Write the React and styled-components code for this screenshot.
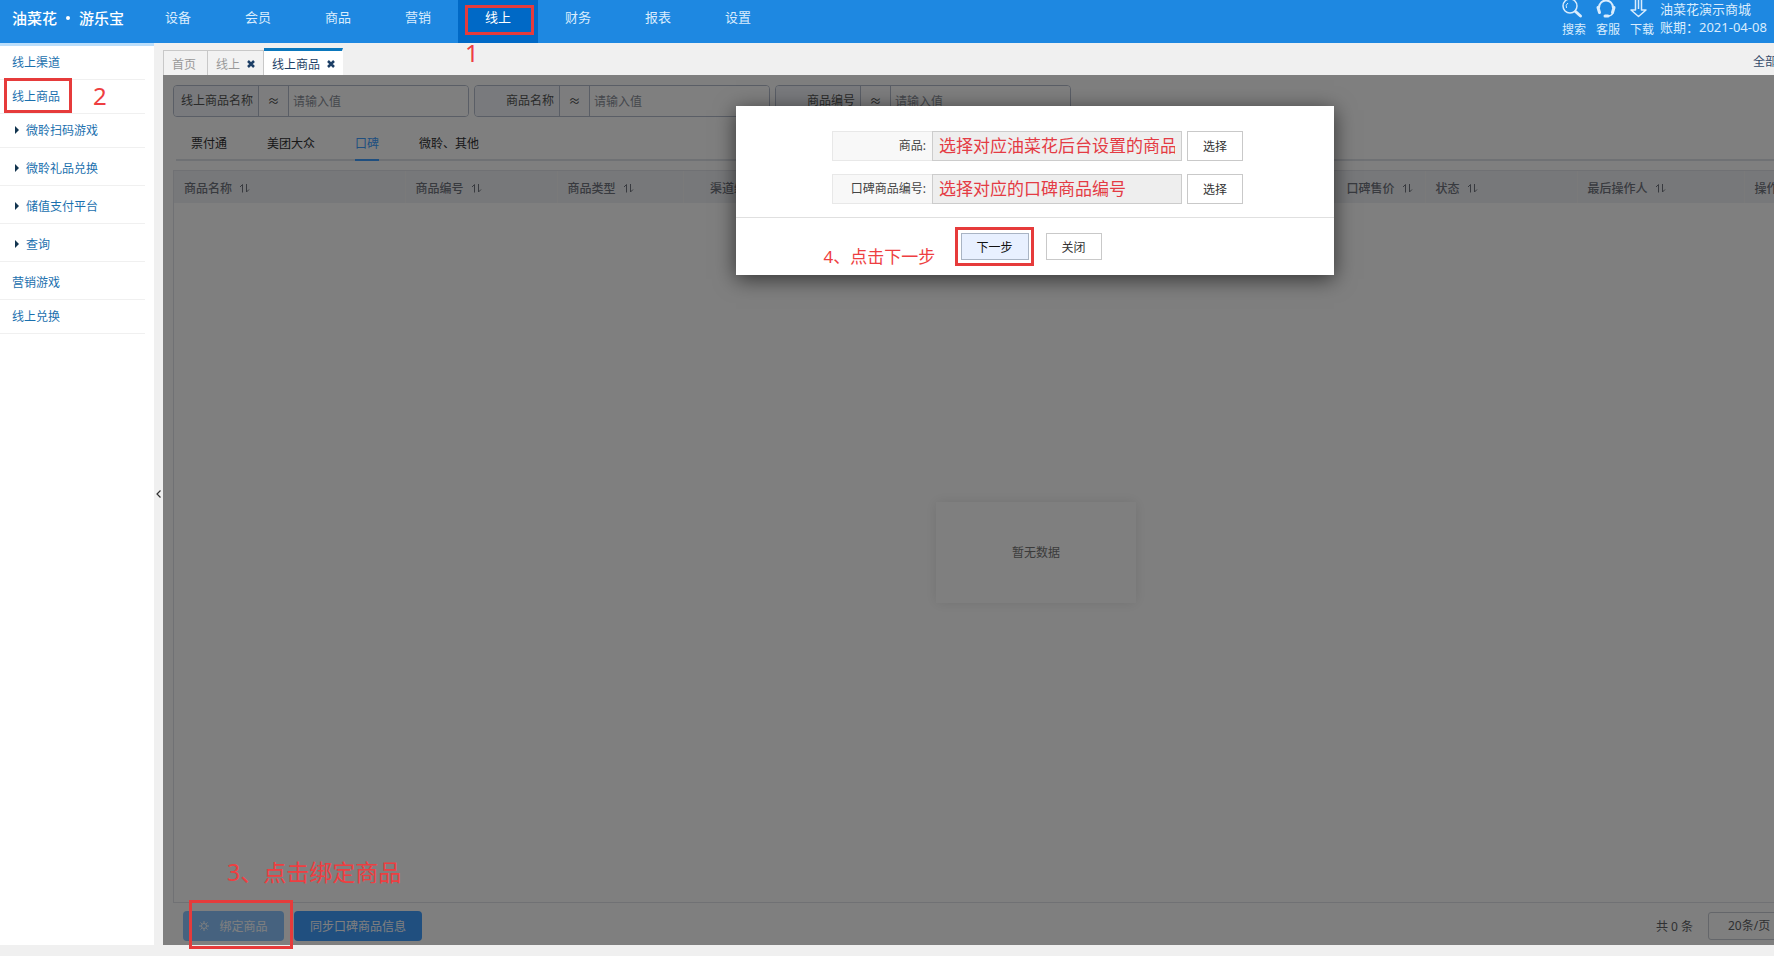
import { useState } from "react";
import styled, { createGlobalStyle } from "styled-components";

const GlobalStyle = createGlobalStyle`
    * {
        box-sizing: border-box;
    }

    body {
        margin: 0;
        background: #f0f0f0;
        font-family: "Noto Sans", "Noto Sans CJK SC", sans-serif;
        font-size: 12px;
        overflow: hidden;
    }

    button, input, select {
        font: inherit;
        margin: 0;
    }

    button {
        cursor: pointer;
        padding: 0;
    }

    a {
        text-decoration: none;
    }
`;

const Page = styled.div`
    display: flex;
    flex-direction: column;
    height: 100vh;
    padding-bottom: 11px;
`;

const Header = styled.header`
    display: flex;
    height: 43px;
    flex: none;
    background: #1e88e1;
    color: #fff;
`;

const Logo = styled.div`
    display: flex;
    justify-content: space-between;
    width: 138px;
    height: 35px;
    padding: 0 14px 0 12px;
    align-items: center;
    font-size: 15px;
    font-weight: 500;
    white-space: nowrap;
`;

const LogoDot = styled.span`
    width: 4px;
    height: 4px;
    border-radius: 50%;
    background: #fff;
`;

const Nav = styled.nav`
    display: flex;
    flex: 1;
`;

const NavLink = styled.a`
    position: relative;
    width: 80px;
    height: 43px;
    line-height: 35px;
    text-align: center;
    font-size: 13px;
    color: ${props => props.$active ? "#fff" : "#d9ecfd"};
    background: ${props => props.$active ? "#0069c6" : "transparent"};
`;

const Tools = styled.div`
    display: flex;
    gap: 10px;
`;

const Tool = styled.button`
    display: flex;
    flex-direction: column;
    justify-content: space-between;
    width: 24px;
    height: 39px;
    border: none;
    background: none;
    color: #d9ecfd;
    line-height: 18px;
    white-space: nowrap;

    svg {
        display: block;
        flex: none;
    }
`;

const Account = styled.div`
    width: 120px;
    padding-left: 6px;
    font-size: 13px;
    line-height: 18px;
    color: #d9ecfd;
    white-space: nowrap;
`;

const Body = styled.div`
    display: flex;
    flex: 1;
    min-height: 0;
`;

const Sidebar = styled.aside`
    width: 154px;
    flex: none;
    background: #fff;
    border-top: 3px solid #bbdefb;
`;

const SideLink = styled.a`
    position: relative;
    display: flex;
    align-items: center;
    gap: 7px;
    height: 34px;
    width: 145px;
    padding-left: ${props => props.$sub ? "15px" : "12px"};
    padding-bottom: 1px;
    margin-bottom: ${props => props.$sub ? "4px" : "0"};
    border-bottom: 1px solid #f0f0f0;
    color: #1b70ae;
`;

const Caret = styled.span`
    border-left: 4px solid #12344f;
    border-top: 4px solid transparent;
    border-bottom: 4px solid transparent;
`;

const Splitter = styled.button`
    display: flex;
    align-items: center;
    justify-content: center;
    width: 9px;
    flex: none;
    border: none;
    background: #f0f0f0;
    color: #333;
`;

const Main = styled.main`
    display: flex;
    flex-direction: column;
    flex: 1;
    min-width: 0;
    overflow-x: clip;
`;

const PageTabs = styled.div`
    display: flex;
    align-items: flex-end;
    height: 32px;
    flex: none;
`;

const PageTab = styled.div`
    display: flex;
    align-items: center;
    gap: 7px;
    height: ${props => props.$active ? "27px" : "25px"};
    padding: ${props => props.$active ? "2px 7px 0 8px" : "2px 8px 0 8px"};
    border: 1px solid ${props => props.$active ? "#fff" : "#c8c8c8"};
    border-bottom: none;
    border-top: ${props => props.$active ? "3px solid #0b78bd" : "1px solid #c8c8c8"};
    border-left-width: ${props => props.$first ? "1px" : "0"};
    background: ${props => props.$active ? "#fff" : "#f2f2f2"};
    color: ${props => props.$active ? "#1d3f66" : "#999"};

    &:first-child {
        padding-right: 11px;
    }
`;

const CloseTab = styled.button`
    display: flex;
    border: none;
    background: none;
    color: #1d3f66;
`;

const AllLink = styled.a`
    width: 21px;
    margin-left: auto;
    overflow: hidden;
    color: #334a6b;
    line-height: 26px;
    white-space: nowrap;
`;

/* the list is wider than the window and runs out past its right edge */
const Workspace = styled.section`
    position: relative;
    display: flex;
    flex-direction: column;
    flex: 1;
    min-height: 0;
    margin-right: -135px;
    padding: 10px 10px 0;
    background: #fff;
`;

const Filters = styled.div`
    display: flex;
    gap: 5px;
`;

const Filter = styled.div`
    display: flex;
    width: 296px;
    height: 32px;
    border: 1px solid #b4bccc;
    border-radius: 4px;
    overflow: hidden;

    label {
        width: 84px;
        padding-right: 5px;
        line-height: 30px;
        text-align: right;
        background: #f2f5fa;
        color: #555;
    }

    button {
        width: 31px;
        border: solid #b4bccc;
        border-width: 0 1px;
        background: #fbfbfd;
        color: #444;
    }

    input {
        flex: 1;
        min-width: 0;
        padding: 0 4px;
        border: none;
        outline: none;
        background: #fff;
    }

    input::placeholder {
        color: #8a8f99;
        opacity: 1;
    }
`;

const ChannelTabs = styled.div`
    display: flex;
    gap: 40px;
    height: 34px;
    flex: none;
    margin: 10px 3px 0;
    padding-left: 15px;
    border-bottom: 2px solid #dfe2e8;
`;

const ChannelTab = styled.button`
    height: 34px;
    border: none;
    border-bottom: 2px solid ${props => props.$active ? "#409eff" : "transparent"};
    background: none;
    color: ${props => props.$active ? "#409eff" : "#303133"};
`;

const List = styled.div`
    display: flex;
    flex-direction: column;
    flex: 1;
    margin-top: 9px;
    border: 1px solid #e0e3e8;
`;

const Table = styled.table`
    width: 100%;
    table-layout: fixed;
    border-collapse: collapse;

    th {
        height: 32px;
        padding: 2px 10px 0;
        background: #eff1f4;
        border-right: 1px solid #f5f5f5;
        color: #71757f;
        font-weight: 500;
        text-align: left;
        white-space: nowrap;
    }
`;

const HeadCell = styled.span`
    display: flex;
    align-items: center;
    justify-content: ${props => props.$center ? "center" : "flex-start"};
    gap: 7px;
`;

const EmptyArea = styled.div`
    display: flex;
    flex: 1;
    align-items: center;
    justify-content: center;
`;

const Empty = styled.div`
    width: 200px;
    line-height: 101px;
    text-align: center;
    color: #777;
    box-shadow: 0 0 12px rgba(0, 0, 0, 0.1);
`;

const Footer = styled.footer`
    display: flex;
    align-items: center;
    gap: 10px;
    height: 42px;
    flex: none;
    padding: 3px 91px 0 10px;
`;

const ActionButton = styled.button`
    display: flex;
    align-items: center;
    justify-content: center;
    gap: 10px;
    height: 30px;
    width: ${props => props.$wide ? "128px" : "101px"};
    border: none;
    border-radius: 4px;
    background: ${props => props.disabled ? "#8cc5ff" : "#409eff"};
    color: #fff;
`;

const Total = styled.span`
    margin-left: auto;
    margin-right: 5px;
    color: #606266;
`;

const PageSize = styled.select`
    appearance: none;
    width: 100px;
    height: 28px;
    padding: 0 19px;
    border: 1px solid #c8ccd4;
    border-radius: 3px;
    background: #fff;
    color: #606266;
`;

const Shade = styled.div`
    position: absolute;
    inset: 0;
    background: rgba(0, 0, 0, 0.5);
`;

const DialogLayer = styled.div`
    position: absolute;
    top: 31px;
    left: 0;
    right: 0;
    display: flex;
    justify-content: center;
    padding-right: 2px;
`;

const Dialog = styled.div`
    width: 598px;
    background: #fff;
    box-shadow: 0 4px 20px rgba(0, 0, 0, 0.6);
`;

const Fields = styled.div`
    display: flex;
    flex-direction: column;
    gap: 13px;
    padding: 25px 91px 13px 96px;
`;

const Field = styled.div`
    display: flex;
    height: 30px;

    label {
        width: 100px;
        padding-right: 6px;
        border: 1px solid #e8e8e8;
        border-right: none;
        background: #f8f8f8;
        line-height: 28px;
        text-align: right;
        color: #444;
    }

    input {
        flex: 1;
        min-width: 0;
        margin-right: 5px;
        padding: 0 6px 3px;
        border: 1px solid #ccc;
        outline: none;
        background: #eee;
        color: #e43b44;
        font-size: 17px;
    }
`;

const PlainButton = styled.button`
    width: ${props => props.$primary ? "68px" : "56px"};
    height: ${props => props.$tall ? "30px" : "27px"};
    border: 1px solid ${props => props.$primary ? "#a9b4c4" : "#c9c9c9"};
    background: ${props => props.$primary ? "#e8f0ff" : "#fff"};
    color: ${props => props.$primary ? "#111" : "#333"};
`;

const DialogFooter = styled.div`
    display: flex;
    justify-content: center;
    gap: 17px;
    height: 58px;
    padding: 15px 8px 0 0;
    border-top: 1px solid #e0e0e0;
`;

const Anchor = styled.span`
    position: relative;
    display: block;
`;

const Frame = styled.span`
    position: absolute;
    top: ${props => props.$top}px;
    left: ${props => props.$left}px;
    width: ${props => props.$width}px;
    height: ${props => props.$height}px;
    border: 3px solid #e63b3b;
    pointer-events: none;
`;

const Note = styled.span`
    position: absolute;
    z-index: 1;
    top: ${props => props.$top}px;
    left: ${props => props.$left}px;
    font-size: ${props => props.$size}px;
    line-height: 24px;
    color: #ee3e41;
    white-space: nowrap;
    pointer-events: none;
`;

const FooterNotes = styled.div`
    position: absolute;
    left: 0;
    bottom: 45px;
`;

const navItems = ["设备", "会员", "商品", "营销", "线上", "财务", "报表", "设置"];

const sideItems = [
    { label: "线上渠道" },
    { label: "线上商品", marked: true },
    { label: "微聆扫码游戏", sub: true },
    { label: "微聆礼品兑换", sub: true },
    { label: "储值支付平台", sub: true },
    { label: "查询", sub: true },
    { label: "营销游戏" },
    { label: "线上兑换" },
];

const filters = ["线上商品名称", "商品名称", "商品编号"];

const channels = ["票付通", "美团大众", "口碑", "微聆、其他"];

const columns = [
    { label: "商品名称", width: 231 },
    { label: "商品编号", width: 152 },
    { label: "商品类型", width: 126 },
    { label: "渠道编号", width: 120, center: true },
    { label: "", width: 533 },
    { label: "口碑售价", width: 89 },
    { label: "状态", width: 152 },
    { label: "最后操作人", width: 167 },
    { label: "操作" },
];

const SearchIcon = () => (
    <svg width="22" height="19" viewBox="0 0 22 19" fill="none" stroke="currentColor">
        <circle cx="8" cy="6" r="7" strokeWidth="1.5" />
        <path d="M4.5 8A4 4 0 0 1 6 3" />
        <path d="M13.5 11.5l5 4.500" strokeWidth="3" strokeLinecap="round" />
    </svg>
);

const ServiceIcon = () => (
    <svg width="22" height="19" viewBox="0 0 22 19" fill="none" stroke="currentColor">
        <path d="M3 8C3 -2 17 -2 17 8" strokeWidth="2" />
        <path d="M2 7.500l1.500 5M18 7.500l-1.500 5" strokeWidth="3" strokeLinecap="round" />
        <path d="M17 13q-1.500 3-5 3" strokeWidth="1.500" />
        <path d="M9 16h3" strokeWidth="3" strokeLinecap="round" />
    </svg>
);

const DownloadIcon = () => (
    <svg width="18" height="19" viewBox="0 0 18 19" fill="none" stroke="currentColor" strokeWidth="1.500">
        <path d="M5.500 0v10H1l7.500 6.500L16 10h-4.500V0M8.500 0v9" strokeLinejoin="round" />
    </svg>
);

const SortIcon = () => (
    <svg width="11" height="10" viewBox="0 0 11 10" fill="none" stroke="currentColor">
        <path d="M1 4l2.500-2.500v8M7.500 1V9l2.500-2.500" />
    </svg>
);

const CrossIcon = () => (
    <svg width="8" height="8" viewBox="0 0 8 8" stroke="currentColor" strokeWidth="2.500">
        <path d="M1 1l6 6M7 1l-6 6" />
    </svg>
);

const SunIcon = () => (
    <svg width="10" height="10" viewBox="0 0 10 10" fill="none" stroke="currentColor">
        <circle cx="5" cy="5" r="2.500" />
        <path d="M5 0v2M5 8v2M0 5h2M8 5h2M1.500 1.500l1.300 1.300M7.200 7.200l1.300 1.300M8.500 1.500L7.200 2.800M2.800 7.200L1.500 8.500" />
    </svg>
);

const ChevronIcon = () => (
    <svg width="5" height="8" viewBox="0 0 5 8" fill="none" stroke="currentColor">
        <path d="M4.500 0.500L1 4l3.500 3.500" strokeWidth="1.200" />
    </svg>
);

const TopBar = () => (
    <Header>
        <Logo>
            <span>油菜花</span>
            <LogoDot />
            <span>游乐宝</span>
        </Logo>
        <Nav>
            {navItems.map(item => (
                <NavLink key={item} href="#" $active={item === "线上"}>
                    {item}
                    {item === "线上" && (
                        <>
                            <Frame $top={5} $left={7} $width={69} $height={30} />
                            <Note $top={41} $left={7} $size={24}>1</Note>
                        </>
                    )}
                </NavLink>
            ))}
        </Nav>
        <Tools>
            <Tool><SearchIcon />搜索</Tool>
            <Tool><ServiceIcon />客服</Tool>
            <Tool><DownloadIcon />下载</Tool>
        </Tools>
        <Account>
            <div>油菜花演示商城</div>
            <div>账期：2021-04-08</div>
        </Account>
    </Header>
);

const BindDialog = () => {
    const [product, setProduct] = useState("选择对应油菜花后台设置的商品");
    const [code, setCode] = useState("选择对应的口碑商品编号");

    return (
        <DialogLayer>
            <Dialog role="dialog">
                <Fields>
                    <Field>
                        <label htmlFor="product">商品:</label>
                        <input id="product" value={product} onChange={e => setProduct(e.target.value)} />
                        <PlainButton $tall>选择</PlainButton>
                    </Field>
                    <Field>
                        <label htmlFor="code">口碑商品编号:</label>
                        <input id="code" value={code} onChange={e => setCode(e.target.value)} />
                        <PlainButton $tall>选择</PlainButton>
                    </Field>
                </Fields>
                <DialogFooter>
                    <Anchor>
                        <PlainButton $primary>下一步</PlainButton>
                        <Frame $top={-6} $left={-6} $width={79} $height={39} />
                        <Note $top={12} $left={-137} $size={17}>4、点击下一步</Note>
                    </Anchor>
                    <PlainButton>关闭</PlainButton>
                </DialogFooter>
            </Dialog>
        </DialogLayer>
    );
};

const App = () => {
    const [channel, setChannel] = useState("口碑");

    return (
        <Page>
            <GlobalStyle />
            <TopBar />
            <Body>
                <Sidebar>
                    {sideItems.map(item => (
                        <SideLink key={item.label} href="#" $sub={item.sub}>
                            {item.sub && <Caret />}
                            {item.label}
                            {item.marked && (
                                <>
                                    <Frame $top={-2} $left={4} $width={68} $height={35} />
                                    <Note $top={4} $left={93} $size={24}>2</Note>
                                </>
                            )}
                        </SideLink>
                    ))}
                </Sidebar>
                <Splitter aria-label="收起"><ChevronIcon /></Splitter>
                <Main>
                    <PageTabs>
                        <PageTab $first>首页</PageTab>
                        <PageTab>线上<CloseTab aria-label="关闭"><CrossIcon /></CloseTab></PageTab>
                        <PageTab $active>线上商品<CloseTab aria-label="关闭"><CrossIcon /></CloseTab></PageTab>
                        <AllLink href="#">全部</AllLink>
                    </PageTabs>
                    <Workspace>
                        <Filters>
                            {filters.map(label => (
                                <Filter key={label}>
                                    <label htmlFor={label}>{label}</label>
                                    <button>≈</button>
                                    <input id={label} placeholder="请输入值" />
                                </Filter>
                            ))}
                        </Filters>
                        <ChannelTabs>
                            {channels.map(item => (
                                <ChannelTab key={item} $active={item === channel} onClick={() => setChannel(item)}>
                                    {item}
                                </ChannelTab>
                            ))}
                        </ChannelTabs>
                        <List>
                            <Table>
                                <colgroup>
                                    {columns.map((col, i) => <col key={i} width={col.width} />)}
                                </colgroup>
                                <thead>
                                    <tr>
                                        {columns.map((col, i) => (
                                            <th key={i}>
                                                {col.label && (
                                                    <HeadCell $center={col.center}>{col.label}<SortIcon /></HeadCell>
                                                )}
                                            </th>
                                        ))}
                                    </tr>
                                </thead>
                            </Table>
                            <EmptyArea>
                                <Empty>暂无数据</Empty>
                            </EmptyArea>
                        </List>
                        <Footer>
                            <ActionButton disabled><SunIcon />绑定商品</ActionButton>
                            <ActionButton $wide>同步口碑商品信息</ActionButton>
                            <Total>共 0 条</Total>
                            <PageSize aria-label="每页条数">
                                <option>20条/页</option>
                                <option>50条/页</option>
                            </PageSize>
                        </Footer>
                        <Shade />
                        <FooterNotes>
                            <Note $top={-40} $left={64} $size={23}>3、点击绑定商品</Note>
                            <Frame $top={0} $left={26} $width={104} $height={49} />
                        </FooterNotes>
                        <BindDialog />
                    </Workspace>
                </Main>
            </Body>
        </Page>
    );
};

export default App;
